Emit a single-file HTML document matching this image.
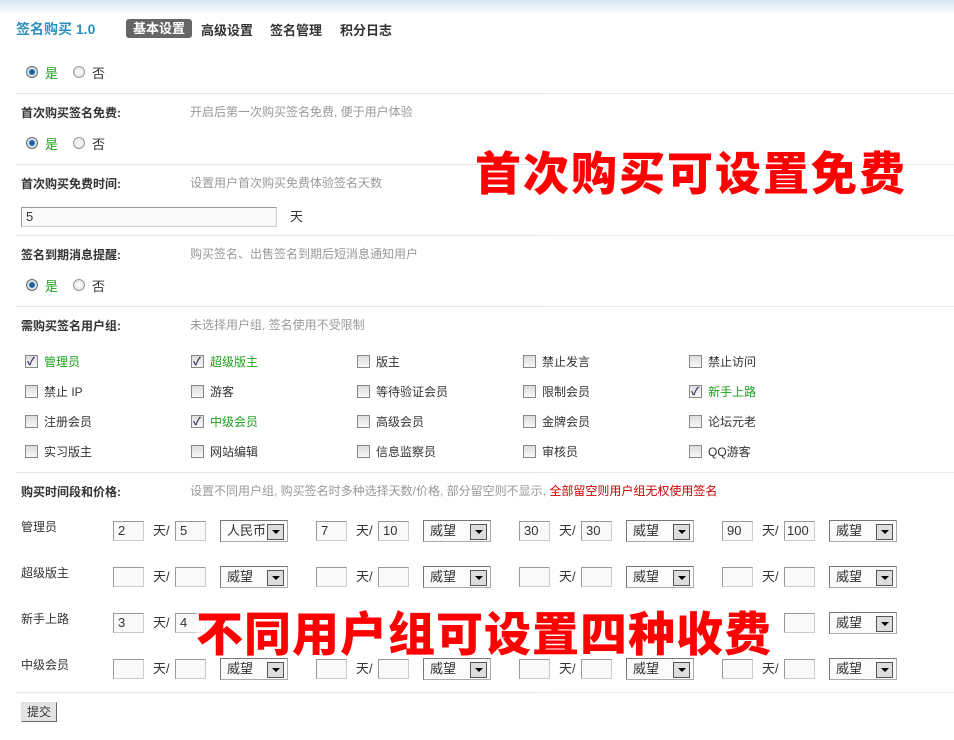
<!DOCTYPE html>
<html><head><meta charset="utf-8"><style>
*{margin:0;padding:0;box-sizing:border-box}
body{width:954px;height:740px;overflow:hidden;background:#fff;position:relative;font-family:"Liberation Sans","Noto Sans CJK SC",sans-serif;font-size:12px;color:#333}
.a{position:absolute;white-space:nowrap}
.top{position:absolute;left:0;top:0;width:954px;height:14px;background:linear-gradient(#d6e6f2,#fff)}
.hr{position:absolute;left:16px;width:938px;height:1px;background:linear-gradient(90deg,#e6e6e6 0,#e6e6e6 520px,#e3edf4 540px)}
.lab{font-weight:bold;color:#333;font-size:12px}
.tip{color:#999;font-size:12px}
.rad{position:absolute;width:12px;height:12px;border-radius:50%;border:1px solid #999;background:radial-gradient(#fff,#ddd)}
.rad.on{background:radial-gradient(#1f5f9a 0,#1f5f9a 35%,#cfe0ee 45%,#eee 100%);border-color:#666}
.cb{position:absolute;width:13px;height:13px;border:1px solid #888;background:linear-gradient(#ddd,#f8f8f8)}
.cb.on::after{content:"✓";position:absolute;left:1px;top:-3px;font-size:11px;color:#336;font-weight:bold}
.g{color:#1ea11e}
.in{position:absolute;height:20px;width:31px;border:1px solid #999;border-right-color:#ccc;border-bottom-color:#ccc;background:#f9f9f9;font-size:13px;padding-left:4px;line-height:18px;color:#333}
.sel{position:absolute;width:68px;height:22px;border:1px solid #777;border-right-color:#aaa;border-bottom-color:#aaa;background:#fbfbfb;font-size:13px;padding-left:6px;line-height:20px}
.sel::after{content:"";position:absolute;right:3px;top:3px;width:15px;height:14px;border:1px solid #555;background:#ddd}
.sel i{position:absolute;right:7px;top:9px;border-left:4px solid transparent;border-right:4px solid transparent;border-top:4px solid #000;z-index:2}
.big{position:absolute;color:#f00;font-family:"Noto Sans CJK SC",sans-serif;font-weight:900;font-size:46px;white-space:nowrap;text-shadow:0 0 2px #fff,0 0 3px #fff;line-height:1}
</style></head><body>
<div class="top"></div>
<div class="a" style="left:16px;top:19px;color:#2b8fbf;font-weight:bold;font-size:14px">签名购买 1.0</div>
<div class="a" style="left:126px;top:19px;width:66px;height:19px;background:#666;color:#fff;border-radius:3px;font-weight:bold;font-size:13px;text-align:center;line-height:19px">基本设置</div>
<div class="a" style="left:201px;top:20px;font-weight:bold;font-size:13px">高级设置</div>
<div class="a" style="left:270px;top:20px;font-weight:bold;font-size:13px">签名管理</div>
<div class="a" style="left:340px;top:20px;font-weight:bold;font-size:13px">积分日志</div>

<div class="rad on" style="left:26px;top:66px"></div><div class="a g" style="left:45px;top:63px;font-size:13px">是</div>
<div class="rad" style="left:73px;top:66px"></div><div class="a" style="left:92px;top:63px;font-size:13px">否</div>
<div class="hr" style="top:93px"></div>

<div class="a lab" style="left:21px;top:104px">首次购买签名免费:</div>
<div class="a tip" style="left:190px;top:103px">开启后第一次购买签名免费, 便于用户体验</div>
<div class="rad on" style="left:26px;top:137px"></div><div class="a g" style="left:45px;top:134px;font-size:13px">是</div>
<div class="rad" style="left:73px;top:137px"></div><div class="a" style="left:92px;top:134px;font-size:13px">否</div>
<div class="hr" style="top:164px"></div>

<div class="a lab" style="left:21px;top:175px">首次购买免费时间:</div>
<div class="a tip" style="left:190px;top:174px">设置用户首次购买免费体验签名天数</div>
<div class="in" style="left:21px;top:207px;width:256px;height:20px">5</div>
<div class="a" style="left:290px;top:206px;font-size:13px">天</div>
<div class="hr" style="top:235px"></div>

<div class="a lab" style="left:21px;top:246px">签名到期消息提醒:</div>
<div class="a tip" style="left:190px;top:245px">购买签名、出售签名到期后短消息通知用户</div>
<div class="rad on" style="left:26px;top:279px"></div><div class="a g" style="left:45px;top:276px;font-size:13px">是</div>
<div class="rad" style="left:73px;top:279px"></div><div class="a" style="left:92px;top:276px;font-size:13px">否</div>
<div class="hr" style="top:306px"></div>

<div class="a lab" style="left:21px;top:317px">需购买签名用户组:</div>
<div class="a tip" style="left:190px;top:316px">未选择用户组, 签名使用不受限制</div>

<div class="cb on" style="left:25px;top:355px"></div><div class="a g" style="left:44px;top:353px">管理员</div>
<div class="cb on" style="left:191px;top:355px"></div><div class="a g" style="left:210px;top:353px">超级版主</div>
<div class="cb" style="left:357px;top:355px"></div><div class="a" style="left:376px;top:353px">版主</div>
<div class="cb" style="left:523px;top:355px"></div><div class="a" style="left:542px;top:353px">禁止发言</div>
<div class="cb" style="left:689px;top:355px"></div><div class="a" style="left:708px;top:353px">禁止访问</div>

<div class="cb" style="left:25px;top:385px"></div><div class="a" style="left:44px;top:383px">禁止 IP</div>
<div class="cb" style="left:191px;top:385px"></div><div class="a" style="left:210px;top:383px">游客</div>
<div class="cb" style="left:357px;top:385px"></div><div class="a" style="left:376px;top:383px">等待验证会员</div>
<div class="cb" style="left:523px;top:385px"></div><div class="a" style="left:542px;top:383px">限制会员</div>
<div class="cb on" style="left:689px;top:385px"></div><div class="a g" style="left:708px;top:383px">新手上路</div>

<div class="cb" style="left:25px;top:415px"></div><div class="a" style="left:44px;top:413px">注册会员</div>
<div class="cb on" style="left:191px;top:415px"></div><div class="a g" style="left:210px;top:413px">中级会员</div>
<div class="cb" style="left:357px;top:415px"></div><div class="a" style="left:376px;top:413px">高级会员</div>
<div class="cb" style="left:523px;top:415px"></div><div class="a" style="left:542px;top:413px">金牌会员</div>
<div class="cb" style="left:689px;top:415px"></div><div class="a" style="left:708px;top:413px">论坛元老</div>

<div class="cb" style="left:25px;top:445px"></div><div class="a" style="left:44px;top:443px">实习版主</div>
<div class="cb" style="left:191px;top:445px"></div><div class="a" style="left:210px;top:443px">网站编辑</div>
<div class="cb" style="left:357px;top:445px"></div><div class="a" style="left:376px;top:443px">信息监察员</div>
<div class="cb" style="left:523px;top:445px"></div><div class="a" style="left:542px;top:443px">审核员</div>
<div class="cb" style="left:689px;top:445px"></div><div class="a" style="left:708px;top:443px">QQ游客</div>
<div class="hr" style="top:472px"></div>

<div class="a lab" style="left:21px;top:483px">购买时间段和价格:</div>
<div class="a tip" style="left:190px;top:482px">设置不同用户组, 购买签名时多种选择天数/价格, 部分留空则不显示, <span style="color:#c00">全部留空则用户组无权使用签名</span></div>

<div class="a" style="left:21px;top:518px">管理员</div>
<div class="a" style="left:21px;top:564px">超级版主</div>
<div class="a" style="left:21px;top:610px">新手上路</div>
<div class="a" style="left:21px;top:656px">中级会员</div>

<!-- row1 -->
<div class="in" style="left:113px;top:521px">2</div><div class="a" style="left:153px;top:520px;font-size:13px">天/</div><div class="in" style="left:175px;top:521px">5</div><div class="sel" style="left:220px;top:520px">人民币<i></i></div>
<div class="in" style="left:316px;top:521px">7</div><div class="a" style="left:356px;top:520px;font-size:13px">天/</div><div class="in" style="left:378px;top:521px">10</div><div class="sel" style="left:423px;top:520px">威望<i></i></div>
<div class="in" style="left:519px;top:521px">30</div><div class="a" style="left:559px;top:520px;font-size:13px">天/</div><div class="in" style="left:581px;top:521px">30</div><div class="sel" style="left:626px;top:520px">威望<i></i></div>
<div class="in" style="left:722px;top:521px">90</div><div class="a" style="left:762px;top:520px;font-size:13px">天/</div><div class="in" style="left:784px;top:521px;padding-left:2px">100</div><div class="sel" style="left:829px;top:520px">威望<i></i></div>
<!-- row2 -->
<div class="in" style="left:113px;top:567px"></div><div class="a" style="left:153px;top:566px;font-size:13px">天/</div><div class="in" style="left:175px;top:567px"></div><div class="sel" style="left:220px;top:566px">威望<i></i></div>
<div class="in" style="left:316px;top:567px"></div><div class="a" style="left:356px;top:566px;font-size:13px">天/</div><div class="in" style="left:378px;top:567px"></div><div class="sel" style="left:423px;top:566px">威望<i></i></div>
<div class="in" style="left:519px;top:567px"></div><div class="a" style="left:559px;top:566px;font-size:13px">天/</div><div class="in" style="left:581px;top:567px"></div><div class="sel" style="left:626px;top:566px">威望<i></i></div>
<div class="in" style="left:722px;top:567px"></div><div class="a" style="left:762px;top:566px;font-size:13px">天/</div><div class="in" style="left:784px;top:567px"></div><div class="sel" style="left:829px;top:566px">威望<i></i></div>
<!-- row3 -->
<div class="in" style="left:113px;top:613px">3</div><div class="a" style="left:153px;top:612px;font-size:13px">天/</div><div class="in" style="left:175px;top:613px">4</div>
<div class="in" style="left:784px;top:613px"></div><div class="sel" style="left:829px;top:612px">威望<i></i></div>
<!-- row4 -->
<div class="in" style="left:113px;top:659px"></div><div class="a" style="left:153px;top:658px;font-size:13px">天/</div><div class="in" style="left:175px;top:659px"></div><div class="sel" style="left:220px;top:658px">威望<i></i></div>
<div class="in" style="left:316px;top:659px"></div><div class="a" style="left:356px;top:658px;font-size:13px">天/</div><div class="in" style="left:378px;top:659px"></div><div class="sel" style="left:423px;top:658px">威望<i></i></div>
<div class="in" style="left:519px;top:659px"></div><div class="a" style="left:559px;top:658px;font-size:13px">天/</div><div class="in" style="left:581px;top:659px"></div><div class="sel" style="left:626px;top:658px">威望<i></i></div>
<div class="in" style="left:722px;top:659px"></div><div class="a" style="left:762px;top:658px;font-size:13px">天/</div><div class="in" style="left:784px;top:659px"></div><div class="sel" style="left:829px;top:658px">威望<i></i></div>

<div class="big" style="left:475px;top:148px;letter-spacing:2px">首次购买可设置免费</div>
<div class="big" style="left:196px;top:607px;font-size:47px;letter-spacing:1px;background:rgba(255,255,255,0.6)">不同用户组可设置四种收费</div>

<div class="hr" style="top:692px"></div>
<div class="a" style="left:21px;top:702px;width:36px;height:20px;border:1px solid #666;border-top-color:#ddd;border-left-color:#ddd;background:#e4e4e4;font-size:12px;text-align:center;line-height:18px">提交</div>
</body></html>
